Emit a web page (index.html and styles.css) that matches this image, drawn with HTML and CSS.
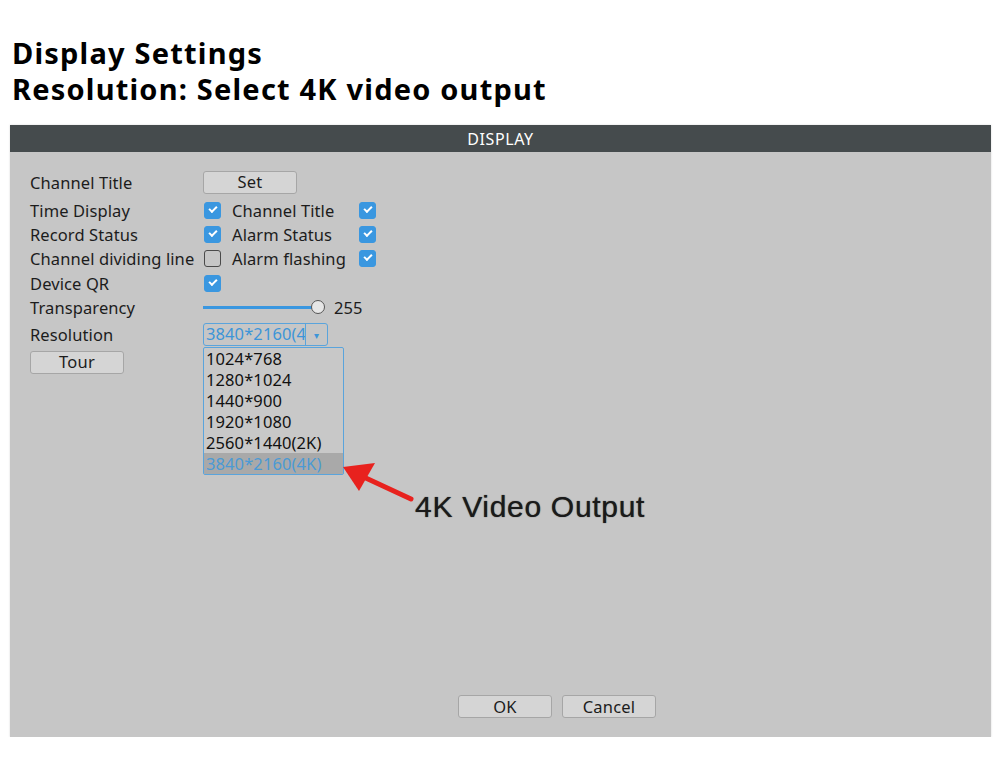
FILE: index.html
```html
<!DOCTYPE html>
<html lang="en">
<head>
    <meta charset="UTF-8">
    <title>Display Settings</title>
    <link rel="stylesheet" href="styles.css">
</head>
<body>
    <h1 class="page-title">Display Settings<br>Resolution: Select 4K video output</h1>

    <div class="panel">
        <div class="panel-head">DISPLAY</div>
        <div class="panel-body">
            <div class="form">
                <div class="row first">
                    <span class="label">Channel Title</span>
                    <button class="btn">Set</button>
                </div>
                <div class="row">
                    <span class="label">Time Display</span>
                    <span class="check on"></span>
                    <span class="label2">Channel Title</span>
                    <span class="check on"></span>
                </div>
                <div class="row">
                    <span class="label">Record Status</span>
                    <span class="check on"></span>
                    <span class="label2">Alarm Status</span>
                    <span class="check on"></span>
                </div>
                <div class="row wide">
                    <span class="label">Channel dividing line</span>
                    <span class="check"></span>
                    <span class="label2">Alarm flashing</span>
                    <span class="check on"></span>
                </div>
                <div class="row">
                    <span class="label">Device QR</span>
                    <span class="check on"></span>
                </div>
                <div class="row">
                    <span class="label">Transparency</span>
                    <div class="slider"><span class="knob"></span></div>
                    <span class="value">255</span>
                </div>
                <div class="row tall">
                    <span class="label">Resolution</span>
                    <div class="select">
                        <span class="select-text">3840*2160(4K)</span>
                        <span class="select-arrow">&#9662;</span>
                        <ul class="options">
                            <li>1024*768</li>
                            <li>1280*1024</li>
                            <li>1440*900</li>
                            <li>1920*1080</li>
                            <li>2560*1440(2K)</li>
                            <li class="selected">3840*2160(4K)</li>
                        </ul>
                    </div>
                </div>
                <div class="row">
                    <button class="btn">Tour</button>
                </div>
            </div>

            <div class="footer">
                <button class="btn">OK</button>
                <button class="btn">Cancel</button>
            </div>

            <svg class="pointer" width="90" height="50" viewBox="0 0 90 50">
                <line x1="78" y1="42" x2="22" y2="16" stroke="#e8221e" stroke-width="5" stroke-linecap="round"/>
                <polygon points="10,10 42,6 26,34" fill="#e8221e"/>
            </svg>
            <div class="note">4K Video Output</div>
        </div>
    </div>
</body>
</html>
```

FILE: styles.css
```css
body {
    margin: 0;
    background: #ffffff;
    font-family: "Noto Sans", sans-serif;
}
.page-title {
    margin: 0;
    padding: 35px 0 0 12px;
    font-size: 29px;
    line-height: 36px;
    font-weight: 700;
    color: #000;
    letter-spacing: 1.2px;
}
.panel {
    margin: 18px 9px 0 10px;
    height: 612px;
    display: flex;
    flex-direction: column;
    box-shadow: 0 0 2px #d8d8d8;
}
.panel-head {
    height: 27px;
    line-height: 28px;
    background: #454b4d;
    color: #fff;
    text-align: center;
    font-size: 16px;
    letter-spacing: 0.6px;
}
.panel-body {
    flex: 1;
    position: relative;
    background: #c6c6c6;
    display: flex;
    flex-direction: column;
    padding: 14px 0 19px 20px;
    color: #1c1c1c;
    font-size: 16.5px;
    letter-spacing: 0.1px;
}
.row {
    display: flex;
    align-items: center;
    height: 24px;
}
.row.first {
    height: 32px;
}
.row.wide {
    height: 25px;
}
.row.tall {
    height: 31px;
}
.label {
    width: 173px;
    white-space: nowrap;
}
.label2 {
    width: 126px;
    margin-left: 11px;
    white-space: nowrap;
}
.check {
    box-sizing: border-box;
    width: 17px;
    height: 17px;
    margin-left: 1px;
    border-radius: 3px;
    border: 1.5px solid #4a4a4a;
    position: relative;
}
.check.on {
    background: #3a97e0;
    border-color: #3a97e0;
}
.check.on::after {
    content: "";
    position: absolute;
    left: 4px;
    top: 3px;
    width: 6px;
    height: 3px;
    border-left: 2px solid #fff;
    border-bottom: 2px solid #fff;
    transform: rotate(-45deg);
}
.btn {
    width: 94px;
    height: 23px;
    padding: 0;
    border: 1px solid #a6a6a6;
    border-radius: 3px;
    background: #d5d5d5;
    font-family: "Noto Sans", sans-serif;
    font-size: 16.5px;
    letter-spacing: 0.2px;
    color: #1c1c1c;
    line-height: 20px;
}
.slider {
    position: relative;
    width: 110px;
    height: 3px;
    background: #3a97e0;
    margin-right: 21px;
}
.knob {
    position: absolute;
    right: -12px;
    top: -6px;
    box-sizing: border-box;
    width: 14px;
    height: 14px;
    border-radius: 50%;
    border: 1.5px solid #555;
    background: #e6e6e6;
}
.value {
    color: #1c1c1c;
}
.select {
    position: relative;
    box-sizing: border-box;
    width: 125px;
    height: 23px;
    border: 1px solid #5aa4dc;
    border-radius: 3px;
    display: flex;
    align-items: center;
    color: #3d95d8;
}
.select-text {
    width: 102px;
    overflow: hidden;
    white-space: nowrap;
    padding-left: 2px;
    line-height: 20px;
    border-right: 1px solid #5aa4dc;
    box-sizing: border-box;
    height: 21px;
}
.select-arrow {
    flex: 1;
    text-align: center;
    font-size: 10px;
}
.options {
    position: absolute;
    left: -1px;
    top: 23px;
    margin: 0;
    padding: 0;
    list-style: none;
    width: 141px;
    height: 128px;
    box-sizing: border-box;
    border: 1px solid #5aa4dc;
    border-radius: 2px;
    background: #c8c8c8;
    color: #111;
}
.options li {
    height: 21px;
    line-height: 21px;
    padding-left: 2px;
    white-space: nowrap;
}
.options li.selected {
    background: #a9a9a9;
    color: #4b9ad5;
}
.footer {
    margin-top: auto;
    display: flex;
    gap: 10px;
    padding-left: 428px;
}
.pointer {
    position: absolute;
    left: 323px;
    top: 305px;
}
.note {
    position: absolute;
    left: 405px;
    top: 338px;
    font-family: "Liberation Sans", Arial, sans-serif;
    font-size: 30px;
    letter-spacing: 0.7px;
    color: #1a1a1a;
    text-shadow: 0 0 1px #333;
}
```
